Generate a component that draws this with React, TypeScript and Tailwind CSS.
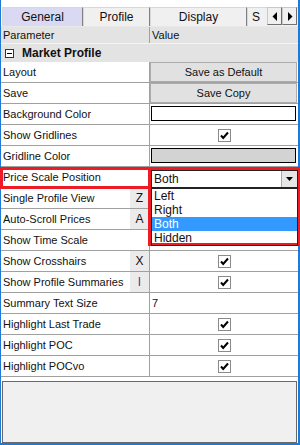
const font = { fontFamily: '"Liberation Sans", Arial, sans-serif' };

function Check() {
  return (
    <svg width="13" height="13" viewBox="0 0 13 13">
      <rect x="0.5" y="0.5" width="12" height="12" fill="#fff" stroke="#8a8a8a" />
      <polyline points="3,6.5 5.2,9 10,3.5" fill="none" stroke="#000" strokeWidth="2" />
    </svg>
  );
}

type Row = {
  label: string;
  key?: string;
  keyColor?: string;
  value?: "default" | "copy" | "white" | "gray" | "check" | "text" | "none";
  text?: string;
};

const rows: Row[] = [
  { label: "Layout", value: "default" },
  { label: "Save", value: "copy" },
  { label: "Background Color", value: "white" },
  { label: "Show Gridlines", value: "check" },
  { label: "Gridline Color", value: "gray" },
  { label: "Price Scale Position", value: "none" },
  { label: "Single Profile View", key: "Z", value: "none" },
  { label: "Auto-Scroll Prices", key: "A", value: "none" },
  { label: "Show Time Scale", value: "none" },
  { label: "Show Crosshairs", key: "X", value: "check" },
  { label: "Show Profile Summaries", key: "I", keyColor: "text-[#7a1a8a]", value: "check" },
  { label: "Summary Text Size", value: "text", text: "7" },
  { label: "Highlight Last Trade", value: "check" },
  { label: "Highlight POC", value: "check" },
  { label: "Highlight POCvo", value: "check" },
];

function Value({ row }: { row: Row }) {
  switch (row.value) {
    case "default":
    case "copy":
      return (
        <div className="flex h-full items-center justify-center border border-[#adadad] bg-[#e1e1e1]">
          {row.value === "default" ? "Save as Default" : "Save Copy"}
        </div>
      );
    case "white":
      return <div className="mx-[1px] my-[2px] h-[15px] border border-black bg-white" />;
    case "gray":
      return <div className="mx-[1px] my-[2px] h-[15px] border border-black bg-[#d3d3d3]" />;
    case "check":
      return (
        <div className="flex h-full items-center justify-center pl-[2px]">
          <Check />
        </div>
      );
    case "text":
      return <div className="flex h-full items-center pl-[2px]">{row.text}</div>;
    default:
      return null;
  }
}

function Tab({ label, w, active }: { label: string; w: string; active?: boolean }) {
  return (
    <div
      className={`flex h-full items-center justify-center border-l border-t border-[#d8d8d8] border-r border-r-[#808080] ${w} ${
        active ? "bg-[#d9d9f3]" : "bg-[#f0f0f0]"
      }`}
    >
      {label}
    </div>
  );
}

function ArrowBtn({ dir }: { dir: "l" | "r" }) {
  return (
    <div className="flex h-[18px] w-[15px] items-center justify-center border border-[#c8c8c8] border-r-[#707070] border-b-[#707070] bg-[#f0f0f0]">
      <svg width="6" height="9" viewBox="0 0 6 9">
        {dir === "l" ? <polygon points="5,0 5,9 0.5,4.5" fill="#000" /> : <polygon points="1,0 1,9 5.5,4.5" fill="#000" />}
      </svg>
    </div>
  );
}

export default function App() {
  return (
    <div
      style={font}
      className="relative flex h-[445px] w-[300px] flex-col border-l border-r-2 border-b-2 border-[#1e7ad4] bg-white text-[11px] text-[#111]"
    >
      <div className="h-[7px]" />
      <div className="relative flex h-[19px] pl-[1px] text-[12px]">
        <Tab label="General" w="w-[81px]" active />
        <Tab label="Profile" w="w-[67px]" />
        <Tab label="Display" w="w-[97px]" />
        <div className="flex h-full flex-1 items-center border-l border-t border-[#d8d8d8] bg-[#f0f0f0] pl-[4px]">S</div>
        <div className="absolute right-[1px] top-0 flex">
          <ArrowBtn dir="l" />
          <ArrowBtn dir="r" />
        </div>
      </div>
      <div className="h-[1px] bg-[#e8e8e8]" />
      <div className="flex h-[16px] bg-[#e3e3e3]">
        <div className="w-[149px] border-r border-[#a0a0a0] pl-[2px] leading-[16px]">Parameter</div>
        <div className="flex-1 pl-[2px] leading-[16px]">Value</div>
      </div>
      <div className="flex h-[19px] items-center gap-[8px] border-t border-[#f4f4f4] bg-[#e3e3e3] pl-[4px] text-[12px] font-bold">
        <svg width="9" height="9" viewBox="0 0 9 9">
          <rect x="0.5" y="0.5" width="8" height="8" fill="#fff" stroke="#333" />
          <line x1="2" y1="4.5" x2="7" y2="4.5" stroke="#000" />
        </svg>
        <span>Market Profile</span>
      </div>
      {rows.map((r) => (
        <div key={r.label} className="flex h-[21px] border-b border-[#a0a0a0]">
          <div className="flex w-[149px] items-center justify-between border-r border-[#a0a0a0] pl-[2px]">
            <span className="whitespace-nowrap">{r.label}</span>
            {r.key && (
              <span className={`flex h-full w-[19px] items-center justify-center bg-[#ebebeb] text-[12px] ${r.keyColor ?? ""}`}>
                {r.key}
              </span>
            )}
          </div>
          <div className="flex-1 pr-[1px]">
            <Value row={r} />
          </div>
        </div>
      ))}
      <div className="h-[4px]" />
      <div className="ml-[1px] mr-[1px] flex-1 border border-[#696969] bg-[#f0f0f0]" />

      {/* red highlight boxes and open dropdown */}
      <div className="absolute left-[-1px] top-[167px] h-[22px] w-[151px] border-[3px] border-[#ed1c24]" />
      <div className="absolute left-[147px] top-[167px] h-[79px] w-[153px] border-[3px] border-[#ed1c24] bg-white">
        <div className="flex h-[19px] items-center justify-between border border-b-2 border-[#222] bg-white pl-[2px] text-[12px]">
          <span>Both</span>
          <div className="flex h-full w-[16px] items-center justify-center border-l border-[#aaa] bg-[#e6e6e6]">
            <svg width="7" height="4" viewBox="0 0 7 4">
              <polygon points="0,0 7,0 3.5,4" fill="#000" />
            </svg>
          </div>
        </div>
        <div className="flex flex-col border border-t-0 border-[#222] text-[12px] leading-[14px]">
          <div className="pl-[2px]">Left</div>
          <div className="pl-[2px]">Right</div>
          <div className="bg-[#3399ff] pl-[2px] text-white">Both</div>
          <div className="pl-[2px]">Hidden</div>
        </div>
      </div>
    </div>
  );
}
